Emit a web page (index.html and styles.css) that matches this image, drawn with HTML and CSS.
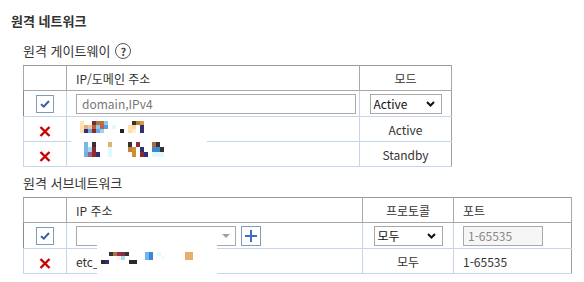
FILE: index.html
```html
<!DOCTYPE html>
<html lang="ko">
<head>
    <meta charset="UTF-8">
    <title>원격 네트워크</title>
    <link rel="stylesheet" href="styles.css">
</head>
<body>
    <h3 class="section-title">원격 네트워크</h3>

    <!-- 원격 게이트웨이 -->
    <div class="group">
        <div class="group-title">원격 게이트웨이 <span class="help-icon">?</span></div>
        <table class="grid grid-gateway">
            <colgroup>
                <col class="col-check">
                <col class="col-gw-addr">
                <col class="col-mode">
            </colgroup>
            <thead>
                <tr>
                    <th></th>
                    <th class="left">IP/도메인 주소</th>
                    <th>모드</th>
                </tr>
            </thead>
            <tbody>
                <tr class="edit-row">
                    <td>
                        <span class="check-box">
                            <svg width="10" height="8" viewBox="0 0 10 8"><path d="M1 4.2 L3.8 6.6 L9 1" fill="none" stroke="#3a5fab" stroke-width="2"/></svg>
                        </span>
                    </td>
                    <td class="left"><div class="text-field gw-field">domain,IPv4</div></td>
                    <td>
                        <div class="select-box mode-select">
                            <span>Active</span>
                            <svg width="9" height="6" viewBox="0 0 9 6"><path d="M1 1 L4.5 4.5 L8 1" fill="none" stroke="#111" stroke-width="2"/></svg>
                        </div>
                    </td>
                </tr>
                <tr>
                    <td><svg class="del-icon" width="12" height="11" viewBox="0 0 12 11"><path d="M1.5 1 L10.5 10 M10.5 1 L1.5 10" stroke="#c80000" stroke-width="2.4"/></svg></td>
                    <td class="left masked">
                        <svg class="mask mask-gw" width="136" height="47" viewBox="0 0 136 47">
                            <rect width="136" height="47" fill="#fff"/>
                            <rect x="9" y="3" width="4" height="4" fill="#fde4b8"/>
                            <rect x="21" y="3" width="4" height="4" fill="#7a2a3a"/>
                            <rect x="25" y="3" width="8" height="4" fill="#b8703a"/>
                            <rect x="33" y="3" width="4" height="4" fill="#8ccaf0"/>
                            <rect x="61" y="3" width="4" height="4" fill="#333"/>
                            <rect x="65" y="3" width="4" height="4" fill="#c07a30"/>
                            <rect x="69" y="3" width="4" height="4" fill="#d89a40"/>
                            <rect x="9" y="7" width="4" height="4" fill="#fde0b4"/>
                            <rect x="13" y="7" width="4" height="4" fill="#e8b070"/>
                            <rect x="17" y="7" width="4" height="4" fill="#f0c8a0"/>
                            <rect x="21" y="7" width="4" height="4" fill="#b06838"/>
                            <rect x="25" y="7" width="4" height="4" fill="#8ccaf0"/>
                            <rect x="29" y="7" width="4" height="4" fill="#c06040"/>
                            <rect x="33" y="7" width="4" height="4" fill="#5a9ee0"/>
                            <rect x="41" y="7" width="4" height="4" fill="#dffaff"/>
                            <rect x="57" y="7" width="4" height="4" fill="#fde0b0"/>
                            <rect x="61" y="7" width="4" height="4" fill="#f8d8a0"/>
                            <rect x="69" y="7" width="4" height="4" fill="#2e3078"/>
                            <rect x="9" y="11" width="4" height="4" fill="#fde0b0"/>
                            <rect x="13" y="11" width="4" height="4" fill="#303078"/>
                            <rect x="17" y="11" width="4" height="4" fill="#6aa8e8"/>
                            <rect x="21" y="11" width="4" height="4" fill="#8a2a2a"/>
                            <rect x="25" y="11" width="4" height="4" fill="#6aa8e8"/>
                            <rect x="29" y="11" width="4" height="4" fill="#9cd0f4"/>
                            <rect x="49" y="11" width="4" height="4" fill="#222"/>
                            <rect x="57" y="11" width="4" height="4" fill="#fde0b0"/>
                            <rect x="61" y="11" width="4" height="4" fill="#fff0d0"/>
                            <rect x="69" y="11" width="4" height="4" fill="#2e3078"/>
                            <rect x="13" y="24" width="4" height="5" fill="#78b8e8"/>
                            <rect x="21" y="24" width="4" height="5" fill="#333"/>
                            <rect x="37" y="24" width="4" height="5" fill="#e8b070"/>
                            <rect x="57" y="24" width="4" height="5" fill="#333"/>
                            <rect x="65" y="24" width="4" height="5" fill="#8a2a40"/>
                            <rect x="81" y="24" width="4" height="5" fill="#b06a30"/>
                            <rect x="85" y="24" width="4" height="5" fill="#333"/>
                            <rect x="13" y="29" width="4" height="5" fill="#78b8e8"/>
                            <rect x="17" y="29" width="4" height="5" fill="#a8d8f8"/>
                            <rect x="21" y="29" width="4" height="5" fill="#8a2a3a"/>
                            <rect x="37" y="29" width="4" height="5" fill="#dffaff"/>
                            <rect x="57" y="29" width="4" height="5" fill="#c88040"/>
                            <rect x="61" y="29" width="4" height="5" fill="#d09030"/>
                            <rect x="69" y="29" width="4" height="5" fill="#2e3078"/>
                            <rect x="81" y="29" width="8" height="5" fill="#3a8ad0"/>
                            <rect x="89" y="29" width="4" height="5" fill="#333"/>
                            <rect x="13" y="34" width="4" height="5" fill="#70b0e8"/>
                            <rect x="17" y="34" width="4" height="5" fill="#a06080"/>
                            <rect x="21" y="34" width="4" height="5" fill="#8a3030"/>
                            <rect x="25" y="34" width="4" height="5" fill="#303078"/>
                            <rect x="37" y="34" width="4" height="5" fill="#dffaff"/>
                            <rect x="61" y="34" width="4" height="5" fill="#d09030"/>
                            <rect x="69" y="34" width="4" height="5" fill="#8a2a2a"/>
                            <rect x="73" y="34" width="4" height="5" fill="#2e3078"/>
                            <rect x="81" y="34" width="12" height="5" fill="#dffaff"/>
                        </svg>
                    </td>
                    <td>Active</td>
                </tr>
                <tr>
                    <td><svg class="del-icon" width="12" height="11" viewBox="0 0 12 11"><path d="M1.5 1 L10.5 10 M10.5 1 L1.5 10" stroke="#c80000" stroke-width="2.4"/></svg></td>
                    <td class="left"></td>
                    <td>Standby</td>
                </tr>
            </tbody>
        </table>
    </div>

    <!-- 원격 서브네트워크 -->
    <div class="group">
        <div class="group-title">원격 서브네트워크</div>
        <table class="grid grid-subnet">
            <colgroup>
                <col class="col-check">
                <col class="col-sub-addr">
                <col class="col-proto">
                <col class="col-port">
            </colgroup>
            <thead>
                <tr>
                    <th></th>
                    <th class="left">IP 주소</th>
                    <th>프로토콜</th>
                    <th class="left">포트</th>
                </tr>
            </thead>
            <tbody>
                <tr class="edit-row">
                    <td>
                        <span class="check-box">
                            <svg width="10" height="8" viewBox="0 0 10 8"><path d="M1 4.2 L3.8 6.6 L9 1" fill="none" stroke="#3a5fab" stroke-width="2"/></svg>
                        </span>
                    </td>
                    <td class="left">
                        <div class="addr-line">
                            <div class="combo-box">
                                <svg width="8" height="4" viewBox="0 0 8 4"><path d="M0 0 H8 L4 4 Z" fill="#a0a0a0"/></svg>
                            </div>
                            <span class="add-button">
                                <svg width="12" height="12" viewBox="0 0 12 12"><path d="M6 0 V12 M0 6 H12" stroke="#3a6fc4" stroke-width="2"/></svg>
                            </span>
                        </div>
                    </td>
                    <td>
                        <div class="select-box proto-select">
                            <span>모두</span>
                            <svg width="9" height="6" viewBox="0 0 9 6"><path d="M1 1 L4.5 4.5 L8 1" fill="none" stroke="#111" stroke-width="2"/></svg>
                        </div>
                    </td>
                    <td class="left"><div class="text-field port-field">1-65535</div></td>
                </tr>
                <tr>
                    <td><svg class="del-icon" width="12" height="11" viewBox="0 0 12 11"><path d="M1.5 1 L10.5 10 M10.5 1 L1.5 10" stroke="#c80000" stroke-width="2.4"/></svg></td>
                    <td class="left masked">
                        etc_
                        <svg class="mask mask-subnet" width="120" height="41" viewBox="0 0 120 41">
                            <rect width="120" height="41" fill="#fff"/>
                            <rect x="4" y="17" width="4" height="4" fill="#2a2a2a"/>
                            <rect x="8" y="17" width="4" height="4" fill="#2e3070"/>
                            <rect x="12" y="9" width="4" height="4" fill="#333"/>
                            <rect x="16" y="9" width="4" height="4" fill="#a8743c"/>
                            <rect x="20" y="9" width="4" height="4" fill="#9a2c48"/>
                            <rect x="24" y="9" width="4" height="4" fill="#8c2a52"/>
                            <rect x="28" y="9" width="4" height="4" fill="#333"/>
                            <rect x="20" y="13" width="4" height="4" fill="#fff4dc"/>
                            <rect x="24" y="13" width="4" height="4" fill="#a8dcf8"/>
                            <rect x="32" y="17" width="8" height="4" fill="#2a2a2a"/>
                            <rect x="48" y="9" width="4" height="8" fill="#74b4ee"/>
                            <rect x="52" y="9" width="4" height="8" fill="#3a86d6"/>
                            <rect x="60" y="9" width="4" height="4" fill="#dcfcff"/>
                            <rect x="64" y="13" width="4" height="4" fill="#eefeff"/>
                            <rect x="88" y="9" width="8" height="8" fill="#e8ae6e"/>
                        </svg>
                    </td>
                    <td>모두</td>
                    <td class="left">1-65535</td>
                </tr>
            </tbody>
        </table>
    </div>
</body>
</html>
```

FILE: styles.css
```css
* {
    box-sizing: border-box;
}

body {
    margin: 0;
    padding: 12px 11px;
    font-family: "Noto Sans CJK KR", "Noto Sans", sans-serif;
    font-size: 12px;
    color: #333;
    background: #fff;
}

.section-title {
    margin: 0 0 12px;
    font-size: 13px;
    line-height: 18px;
    font-weight: bold;
}

.group {
    margin-left: 12px;
}

.group-title {
    display: flex;
    align-items: center;
    gap: 5px;
    font-size: 13px;
    line-height: 18px;
    margin-bottom: 5px;
}

.help-icon {
    display: inline-flex;
    align-items: center;
    justify-content: center;
    width: 16px;
    height: 16px;
    border: 1.5px solid #555;
    border-radius: 50%;
    font-size: 11px;
    font-weight: bold;
    line-height: 1;
    color: #444;
}

/* tables */
.grid {
    border-collapse: collapse;
    table-layout: fixed;
    margin-bottom: 7px;
}

.grid-gateway {
    width: 428px;
}

.grid-subnet {
    width: 548px;
}

.col-check { width: 43px; }
.col-gw-addr { width: 293px; }
.col-mode { width: 92px; }
.col-sub-addr { width: 296px; }
.col-proto { width: 91px; }
.col-port { width: 118px; }

.grid th,
.grid td {
    padding: 0;
    text-align: center;
    vertical-align: middle;
    white-space: nowrap;
}

.grid th {
    height: 25px;
    font-weight: normal;
    border: 1px solid #a8a8a8;
    border-top-color: #999;
}

.grid td {
    height: 25px;
    border: 1px solid #c6d6ea;
}

.grid .left {
    text-align: left;
    padding-left: 9px;
}

.grid td:last-child {
    border-right-color: #a0a0a0;
}

.grid .edit-row td {
    height: 26px;
}

.grid .edit-row td:first-child {
    border-left-color: #8a8a8a;
}

.check-box {
    display: inline-flex;
    align-items: center;
    justify-content: center;
    width: 18px;
    height: 18px;
    border: 1px solid #7f9db9;
    vertical-align: middle;
}

.del-icon {
    display: inline-block;
    vertical-align: middle;
}

/* form controls */
.text-field {
    height: 20px;
    border: 1px solid #a9a9a9;
    padding: 0 5px;
    line-height: 18px;
    color: #777;
}

.gw-field {
    width: 280px;
}

.port-field {
    width: 80px;
    padding-left: 4px;
    background: #f6f6f6;
    color: #888;
}

.select-box {
    display: inline-flex;
    align-items: center;
    justify-content: space-between;
    height: 20px;
    border: 1px solid #a9a9a9;
    padding: 0 6px 0 3px;
    color: #111;
    vertical-align: middle;
}

.mode-select {
    width: 72px;
}

.proto-select {
    width: 69px;
}

.addr-line {
    display: flex;
    align-items: center;
    gap: 5px;
}

.combo-box {
    display: flex;
    align-items: center;
    justify-content: flex-end;
    width: 160px;
    height: 20px;
    border: 1px solid #a9a9a9;
    padding-right: 5px;
}

.add-button {
    display: inline-flex;
    align-items: center;
    justify-content: center;
    width: 20px;
    height: 20px;
    border: 1px solid #7f9db9;
}

/* 마스킹 영역 */
.masked {
    position: relative;
}

.mask {
    position: absolute;
    display: block;
}

.mask-gw {
    left: 4px;
    top: 1px;
}

.mask-subnet {
    left: 30px;
    top: -6px;
}
```
